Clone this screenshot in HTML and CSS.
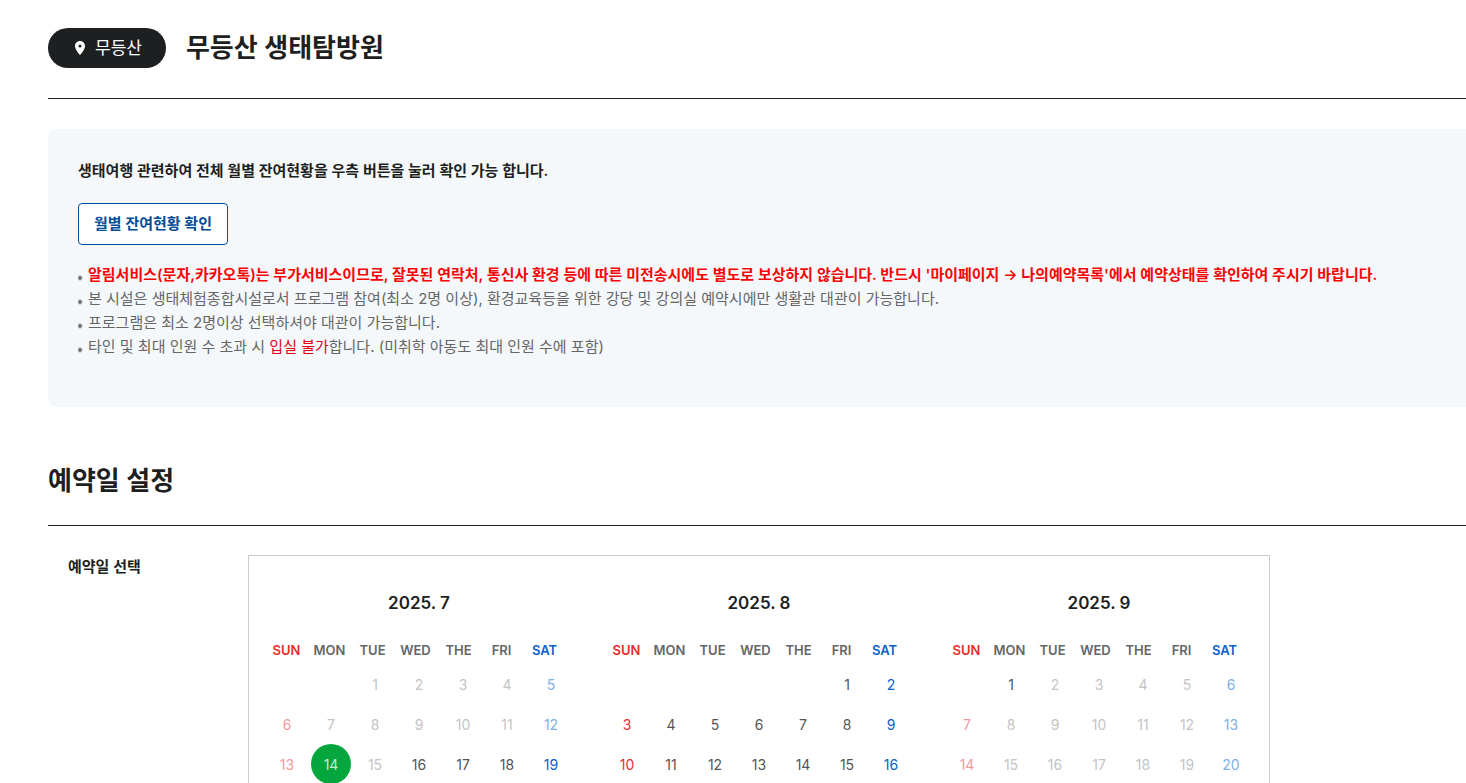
FILE: index.html
```html
<!DOCTYPE html>
<html lang="ko">
<head>
  <meta charset="UTF-8" />
  <meta name="viewport" content="width=device-width, initial-scale=1.0"/>
  <title>무등산 생태탐방원</title>
  <link rel="stylesheet" href="styles.css">
</head>
<body>
  <main class="container">
    <header class="page-title">
      <span class="badge">
        <svg class="pin" viewBox="0 0 10 14" width="10" height="14" aria-hidden="true">
          <path fill="#fff" fill-rule="evenodd" d="M5 0C2.2 0 0 2.2 0 4.9C0 8.6 5 14 5 14S10 8.6 10 4.9C10 2.2 7.8 0 5 0ZM5 3.4A1.5 1.5 0 1 1 5 6.4A1.5 1.5 0 1 1 5 3.4Z"/>
        </svg>
        무등산
      </span>
      <h1>무등산 생태탐방원</h1>
    </header>

    <section class="notice">
      <p class="notice-title">생태여행 관련하여 전체 월별 잔여현황을 우측 버튼을 눌러 확인 가능 합니다.</p>
      <button type="button" class="status-btn">월별 잔여현황 확인</button>
      <ul class="notice-list">
        <li><strong>알림서비스(문자,카카오톡)는 부가서비스이므로, 잘못된 연락처, 통신사 환경 등에 따른 미전송시에도 별도로 보상하지 않습니다. 반드시 '마이페이지 → 나의예약목록'에서 예약상태를 확인하여 주시기 바랍니다.</strong></li>
        <li>본 시설은 생태체험종합시설로서 프로그램 참여(최소 2명 이상), 환경교육등을 위한 강당 및 강의실 예약시에만 생활관 대관이 가능합니다.</li>
        <li>프로그램은 최소 2명이상 선택하셔야 대관이 가능합니다.</li>
        <li>타인 및 최대 인원 수 초과 시 <span class="red">입실 불가</span>합니다. (미취학 아동도 최대 인원 수에 포함)</li>
      </ul>
    </section>

    <section class="booking">
      <h2>예약일 설정</h2>
      <div class="booking-row">
        <h3>예약일 선택</h3>
        <div class="calendar" id="calendar"></div>
      </div>
    </section>
  </main>

  <script>
    const calendar = document.getElementById('calendar');
    const days = ['SUN', 'MON', 'TUE', 'WED', 'THE', 'FRI', 'SAT'];

    // open: first and last day that can be booked
    const months = [
      { year: 2025, month: 7, open: [16, 31], today: 14 },
      { year: 2025, month: 8, open: [1, 31] },
      { year: 2025, month: 9, open: [1, 1] }
    ];

    months.forEach(({ year, month, open, today }) => {
      const first = new Date(year, month - 1, 1).getDay();
      const last = new Date(year, month, 0).getDate();
      let rows = '';

      for (let start = 1 - first; start <= last; start += 7) {
        rows += '<tr>';
        for (let d = start; d < start + 7; d++) {
          if (d < 1 || d > last) {
            rows += '<td></td>';
            continue;
          }
          const closed = d < open[0] || d > open[1];
          rows += `<td><button type="button" class="day${d === today ? ' today' : ''}"${closed ? ' disabled' : ''}>${d}</button></td>`;
        }
        rows += '</tr>';
      }

      const table = document.createElement('table');
      table.className = 'month';
      table.innerHTML = `
        <caption>${year}. ${month}</caption>
        <thead><tr>${days.map(day => `<th scope="col">${day}</th>`).join('')}</tr></thead>
        <tbody>${rows}</tbody>
      `;
      calendar.appendChild(table);
    });
  </script>
</body>
</html>
```

FILE: styles.css
```css
* {
  box-sizing: border-box;
}

body {
  margin: 0;
  background-color: #fff;
  color: #1e1f21;
  font-family: Inter, 'Noto Sans CJK KR', sans-serif;
  font-size: 15px;
  line-height: 24px;
}

h1, h2, h3, p, ul {
  margin: 0;
  padding: 0;
}

button {
  font-family: inherit;
  cursor: pointer;
}

.container {
  padding: 28px 0 40px 48px;
}

.page-title {
  display: flex;
  align-items: center;
  gap: 20px;
  padding-bottom: 30px;
  border-bottom: 1px solid #1e1f21;
}

.badge {
  display: flex;
  align-items: center;
  gap: 10px;
  height: 40px;
  padding: 0 24px 0 27px;
  border-radius: 20px;
  background-color: #1e1f21;
  color: #fff;
  font-size: 17px;
}

h1, h2 {
  font-size: 26px;
  font-weight: 600;
  line-height: 40px;
}

.notice {
  margin-top: 30px;
  padding: 30px 30px 48px;
  border-radius: 8px 0 0 8px;
  background-color: #f4f8fb;
}

.notice-title {
  font-weight: 600;
}

.status-btn {
  display: block;
  height: 42px;
  margin: 20px 0 18px;
  padding: 0 15px 4px;
  border: 1px solid #004c97;
  border-radius: 4px;
  background-color: #fff;
  color: #004c97;
  font-size: 15px;
  font-weight: 600;
}

.notice-list {
  list-style: none;
  color: #666;
}

.notice-list li {
  padding-left: 10px;
  background: radial-gradient(circle at 2px 15px, #666 1px, transparent 3px) no-repeat;
}

.notice-list strong {
  color: #f60505;
  font-weight: 600;
}

.red {
  color: #e60012;
}

.booking {
  margin-top: 54px;
}

.booking h2 {
  padding-bottom: 24px;
  border-bottom: 1px solid #1e1f21;
}

.booking-row {
  display: flex;
  align-items: flex-start;
  padding: 29px 20px 0;
}

.booking-row h3 {
  width: 180px;
  font-size: 15px;
  font-weight: 600;
}

.calendar {
  display: flex;
  border: 1px solid #ccc;
  padding: 32px 0;
}

.month {
  display: block;
  width: 340px;
  padding: 0 16px;
}

.month caption {
  display: block;
  font-size: 17px;
  font-weight: 600;
  line-height: 30px;
}

.month thead {
  display: block;
  padding: 20px 0 2px;
}

.month tbody {
  display: block;
}

.month tr {
  display: flex;
}

.month th {
  width: 43px;
  padding: 0;
  color: #666;
  font-size: 13px;
  font-weight: 600;
}

.month td {
  width: 44px;
  height: 40px;
  padding: 0 2px;
}

.day {
  width: 40px;
  height: 40px;
  padding: 0;
  border: 0;
  border-radius: 50%;
  background: none;
  color: #555;
  font-size: 14px;
}

.month th:first-child,
td:first-child .day {
  color: #e92c2c;
}

.month th:last-child,
td:last-child .day {
  color: #0a62c9;
}

.day:disabled {
  color: #c4c4c4;
  cursor: default;
}

td:first-child .day:disabled {
  color: #f39a9d;
}

td:last-child .day:disabled {
  color: #7fb0e6;
}

.day.today:disabled {
  background-color: #06a63e;
  color: #c9e9d2;
}
```
